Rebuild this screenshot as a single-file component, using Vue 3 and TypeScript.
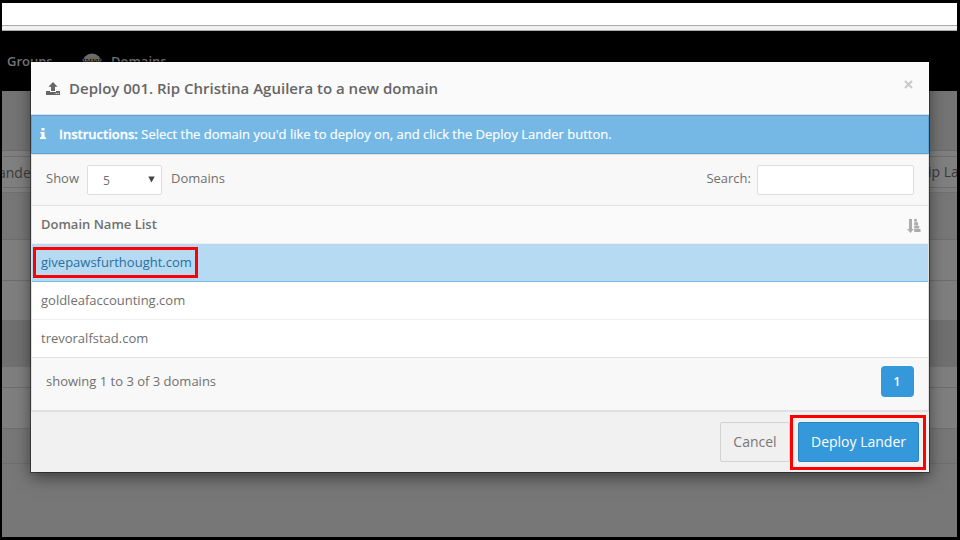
<script setup lang="ts">
import { ref } from 'vue'

interface BackdropRow {
  height: number
  kind: 'dark' | 'light' | 'plain'
  line: boolean
}

const rows: BackdropRow[] = [
  { height: 47, kind: 'plain', line: true },
  { height: 41, kind: 'light', line: true },
  { height: 39, kind: 'light', line: false },
  { height: 47, kind: 'dark', line: false },
  { height: 21, kind: 'light', line: true },
  { height: 41, kind: 'light', line: true },
  { height: 35, kind: 'plain', line: true },
]

const domains: string[] = ['givepawsfurthought.com', 'goldleafaccounting.com', 'trevoralfstad.com']
const selected = ref<string>(domains[0])
const search = ref<string>('')
</script>

<template>
  <div class="screen">
    <div class="page">
      <div class="chrome"></div>
      <div class="toolbar-edge"></div>
      <nav class="nav">
        <span class="nav-groups">Groups</span>
        <svg class="globe" viewBox="0 0 20 20" width="20" height="20">
          <circle cx="10" cy="10" r="9.5" fill="#707070" />
          <rect x="0" y="6" width="20" height="6.5" fill="#000" />
          <text x="10" y="11.3" text-anchor="middle" class="globe-text">WWW</text>
        </svg>
        <span>Domains</span>
      </nav>
      <div class="bg-top"></div>
      <div class="bg-inputs">
        <div class="bg-input"><span class="bg-left">ande</span><span class="bg-right">ip La</span></div>
      </div>
      <div
        v-for="(row, i) in rows"
        :key="i"
        class="bg-row"
        :class="[row.kind, { line: row.line }]"
        :style="{ height: row.height + 'px' }"
      ></div>
    </div>

    <section class="modal">
      <header class="modal-header">
        <svg class="upload" viewBox="0 0 14 13" width="14" height="13">
          <path d="M7 0 11.6 4.8H9V9H5V4.8H2.4Z" />
          <path d="M0 9H4V10H10V9H14V13H0ZM9.7 11V12H10.7V11ZM11.7 11V12H12.7V11Z" fill-rule="evenodd" />
        </svg>
        <h1>Deploy 001. Rip Christina Aguilera to a new domain</h1>
        <svg class="close" viewBox="0 0 9 9" width="9" height="9">
          <path d="M1 1 8 8M8 1 1 8" fill="none" stroke="#c8c8c8" stroke-width="2" />
        </svg>
      </header>

      <div class="alert">
        <svg class="info" viewBox="0 0 6 11" width="6" height="11">
          <path d="M1.5 0H4.5V2.5H1.5ZM0.3 4H4.6V9.2H6V11H0V9.2H1.4V5.6H0.3Z" />
        </svg>
        <p><strong>Instructions:</strong> <span>Select the domain you'd like to deploy on, and click the Deploy Lander button.</span></p>
      </div>

      <div class="panel">
        <div class="controls">
          <span class="show">Show</span>
          <div class="select">
            <span>5</span>
            <svg viewBox="0 0 7 7" width="7" height="7"><path d="M0.3 0.5H6.7L3.5 6.5Z" /></svg>
          </div>
          <span class="unit">Domains</span>
          <label class="search">Search: <input v-model="search" type="text" /></label>
        </div>
        <div class="list-head">
          <span>Domain Name List</span>
          <svg class="sort" viewBox="0 0 14 14" width="14" height="14">
            <path d="M2 0H5V10H6.8L3.5 14 0 10H2ZM7.2 0H9.8V2.8H7.2ZM7.2 3.3H11V6.2H7.2ZM7.2 6.7H12.2V9.6H7.2ZM7.2 10.1H13.5V13H7.2Z" />
          </svg>
        </div>
        <div
          v-for="domain in domains"
          :key="domain"
          class="domain"
          :class="{ selected: domain === selected }"
          @click="selected = domain"
        >
          {{ domain }}
        </div>
        <div class="summary">
          <span>showing 1 to 3 of 3 domains</span>
          <button class="page-btn">1</button>
        </div>
      </div>

      <footer class="modal-footer">
        <button class="btn cancel">Cancel</button>
        <button class="btn deploy">Deploy Lander</button>
      </footer>

      <div class="mark mark-domain"></div>
      <div class="mark mark-deploy"></div>
    </section>
  </div>
</template>

<style>
body {
  background: #000;
  overflow: hidden;
}
</style>

<style scoped>
* {
  box-sizing: border-box;
}
.screen {
  position: relative;
  width: 960px;
  height: 540px;
  padding: 3px 3px 3px 2px;
  background: #000;
  font-family: 'Open Sans', sans-serif;
  font-size: 13px;
  color: #707070;
}
.page {
  height: 534px;
  overflow: hidden;
  background: #777;
}
.chrome {
  height: 23px;
  background: #fff;
  border-bottom: 1px solid #a8a8a8;
}
.toolbar-edge {
  height: 5px;
  background: #f1f1f1;
  border-bottom: 1px solid #aaa;
}
.nav {
  display: flex;
  align-items: center;
  height: 60px;
  padding-left: 5px;
  background: #000;
  color: #777;
  font-weight: 600;
}
.nav-groups {
  width: 75px;
}
.globe {
  margin-right: 9px;
  margin-top: 4px;
}
.globe-text {
  font-size: 6.5px;
  font-weight: 700;
  fill: #858585;
}
.bg-top {
  height: 60px;
  background: #747474;
  border-bottom: 1px solid #6c6c6c;
}
.bg-inputs {
  height: 42px;
  padding: 5px 0 4px;
  background: #808080;
  border-bottom: 1px solid #707070;
}
.bg-input {
  display: flex;
  justify-content: space-between;
  align-items: center;
  height: 32px;
  border: solid #6d6d6d;
  border-width: 1px 0;
  font-size: 14px;
  line-height: 28px;
  color: #3c3c3c;
}
.bg-left {
  margin: 1px 0 0 -4px;
}
.bg-right {
  width: 29px;
  white-space: nowrap;
}
.bg-row.line {
  border-bottom: 1px solid #6d6d6d;
}
.light {
  background: #7f7f7f;
}
.dark {
  background: #707070;
}
.plain {
  background: #777;
}
.modal {
  position: absolute;
  left: 31px;
  top: 62px;
  width: 898px;
  height: 410px;
  background: #f1f1f1;
  box-shadow: 0 0 0 1px rgba(0, 0, 0, 0.4), 0 5px 15px rgba(0, 0, 0, 0.5);
}
.modal-header {
  display: flex;
  align-items: center;
  height: 53px;
  padding: 0 16px 0 15px;
  background: #fafafa;
  border-bottom: 1px solid #dedede;
}
.upload {
  fill: #666;
}
h1 {
  flex: 1;
  margin: 0 0 0 9px;
  font-size: 15px;
  font-weight: 600;
  color: #666;
}
.close {
  margin-bottom: 8px;
}
.alert {
  display: flex;
  align-items: center;
  height: 39px;
  padding-left: 8px;
  background: #75b8e6;
  border: 1px solid #5ca3d6;
  color: #fff;
}
.info {
  fill: #fff;
  margin-bottom: 2px;
}
.alert p {
  margin: 0 0 2px 13px;
  -webkit-text-stroke: 0.15px #fff;
}
.alert strong {
  font-weight: 600;
  -webkit-text-stroke: 0.3px #fff;
}
.panel {
  border: 1px solid #e0e0e0;
  border-bottom-width: 2px;
  background: #f8f8f8;
}
.controls {
  display: flex;
  height: 51px;
  padding: 10px 14px 0;
  line-height: 27px;
  border-bottom: 1px solid #e2e2e2;
}
.show {
  width: 41px;
}
.select {
  display: flex;
  align-items: center;
  justify-content: space-between;
  width: 75px;
  height: 30px;
  padding: 1px 6px 0 15px;
  background: #fff;
  border: 1px solid #ddd;
  border-radius: 2px;
  font-size: 12px;
}
.select svg {
  fill: #444;
  margin-bottom: 2px;
}
.unit {
  margin-left: 9px;
}
.search {
  display: flex;
  margin-left: auto;
}
.search input {
  width: 157px;
  height: 30px;
  margin-left: 6px;
  border: 1px solid #ddd;
  border-radius: 2px;
  background: #fff;
}
.list-head {
  display: flex;
  align-items: center;
  justify-content: space-between;
  height: 38px;
  padding: 0 7px 2px 9px;
  background: #fafafa;
  border-bottom: 1px solid #eee;
  font-weight: 600;
}
.sort {
  fill: #acacac;
  margin-top: 4px;
}
.domain {
  height: 38px;
  padding-left: 9px;
  line-height: 37px;
  background: #fff;
  border-bottom: 1px solid #eee;
}
.domain:nth-last-child(2) {
  border-bottom-color: #e0e0e0;
}
.domain.selected {
  background: #b5daf2;
  border-bottom-color: #7dbbe3;
  color: #2a6f9f;
}
.summary {
  display: flex;
  justify-content: space-between;
  height: 52px;
  padding: 8px 14px 0;
  line-height: 31px;
}
.page-btn {
  width: 33px;
  height: 31px;
  padding: 0 1px 0 0;
  border: 0;
  border-radius: 4px;
  background: #3498db;
  color: #fff;
  font: 600 12px 'Open Sans', sans-serif;
}
.modal-footer {
  display: flex;
  justify-content: flex-end;
  gap: 8px;
  padding: 10px 10px 0;
}
.btn {
  height: 40px;
  padding: 0 0 2px;
  border-radius: 2px;
  font: 14px 'Open Sans', sans-serif;
}
.cancel {
  width: 70px;
  background: #f0f0f0;
  border: 1px solid #d2d2d2;
  color: #777;
}
.deploy {
  width: 121px;
  background: #3498db;
  border: 1px solid #2a83c1;
  color: #fff;
}
.mark {
  position: absolute;
  border: 3px solid #f00;
  pointer-events: none;
}
.mark-domain {
  left: 2px;
  top: 185px;
  width: 165px;
  height: 31px;
}
.mark-deploy {
  left: 759px;
  top: 353px;
  width: 136px;
  height: 55px;
}
</style>
